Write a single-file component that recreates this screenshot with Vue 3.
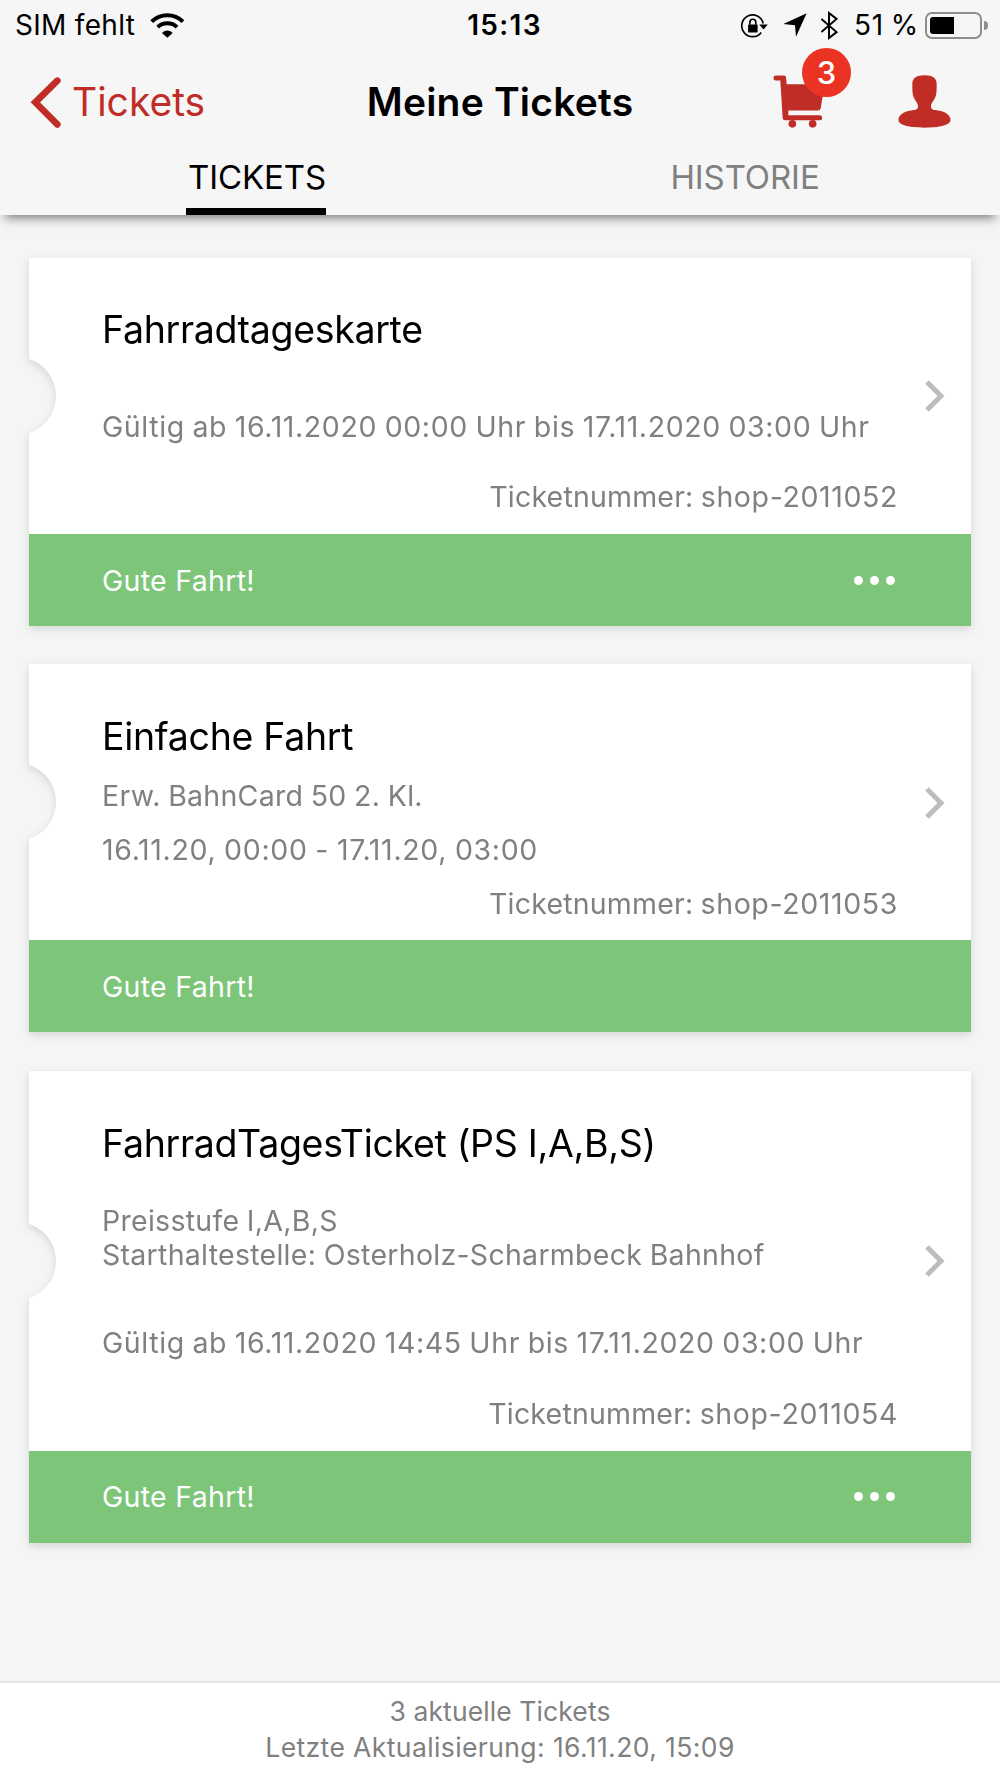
<template>
  <div class="screen">
    <header class="header">
      <!-- Status bar -->
      <div class="status-bar">
        <div class="status-left">
          <span class="carrier">SIM fehlt</span>
          <svg class="icon-wifi" viewBox="448 34 106 76">
            <path class="wifi-arc" d="M453 60 A68 68 0 0 1 548 60" />
            <path class="wifi-arc" d="M471 77 A43 43 0 0 1 530 77" />
            <path d="M484 95 Q500 80 517 95 L500.500 109 Z" />
          </svg>
        </div>
        <span class="clock">15:13</span>
        <div class="status-right">
          <svg class="icon-lock" viewBox="120 34 84 76">
            <path class="lock-ring" d="M190 66 A33 33 0 1 0 184 93" />
            <path d="M178 69 H204 L191 84 Z" />
            <rect x="144" y="69" width="29" height="24" rx="2" />
            <path class="lock-shackle" d="M149.500 70 V62 A9 9 0 0 1 167.500 62 V70" />
          </svg>
          <svg class="icon-location" viewBox="249 38 72 72">
            <path d="M320 39 L288 109 L285 75 L250 71 Z" />
          </svg>
          <svg class="icon-bluetooth" viewBox="361 30 54 88">
            <path d="M365 54 L411 94 L388 112 V36 L411 54 L365 94" />
          </svg>
          <span class="battery-level">{{ battery }} %</span>
          <div class="battery">
            <div class="battery-shell">
              <div class="battery-fill" :style="{ width: `${battery}%` }"></div>
            </div>
            <div class="battery-cap"></div>
          </div>
        </div>
      </div>

      <!-- Navigation -->
      <div class="nav-bar">
        <button class="back">
          <svg class="icon-back" viewBox="92 229 90 153">
            <path d="M171 240 L105 305 L171 371" />
          </svg>
          <span>Tickets</span>
        </button>
        <h1 class="nav-title">Meine Tickets</h1>
        <div class="nav-actions">
          <button class="cart">
            <svg class="icon-cart" viewBox="221 225 156 158">
              <path d="M230 226 H255 Q259 226 260 231 L262 252 H376 L364 325 Q362 331 356 331 H267 V345 H361 A7.500 7.500 0 0 1 361 360 H257 Q251 360 250 354 L243 241 H230 A7.500 7.500 0 0 1 230 226 Z" />
              <circle cx="279" cy="371" r="11.500" />
              <circle cx="340" cy="371" r="11.500" />
            </svg>
            <span class="badge">{{ tickets.length }}</span>
          </button>
          <button class="profile">
            <svg class="icon-profile" viewBox="594 221 160 161">
              <path d="M674 222 C699 222 712 231 711 250 C711 272 711 284 702 298 C695 309 693 312 694 319 C695 327 704 327 715 329 C739 333 753 343 753 358 C753 374 718 381 674 381 C630 381 595 374 595 358 C595 343 609 333 633 329 C644 327 653 327 654 319 C655 312 653 309 646 298 C637 284 637 272 637 250 C636 231 649 222 674 222 Z" />
            </svg>
          </button>
        </div>
      </div>

      <nav class="tabs">
        <div
          v-for="tab in tabs"
          :key="tab"
          class="tab"
          :class="{ active: tab === activeTab }"
          @click="activeTab = tab"
        >
          <span class="tab-label">{{ tab }}</span>
        </div>
      </nav>
    </header>

    <!-- Ticket list -->
    <main class="ticket-list">
      <article v-for="ticket in tickets" :key="ticket.number" class="ticket">
        <div class="ticket-body" :class="ticket.layout">
          <div class="ticket-text">
            <h2 class="ticket-title">{{ ticket.title }}</h2>
            <div v-if="ticket.details.length" class="ticket-details">
              <p v-for="line in ticket.details" :key="line">{{ line }}</p>
            </div>
            <p class="ticket-validity">{{ ticket.validity }}</p>
            <p class="ticket-number">Ticketnummer: <span class="number">{{ ticket.number }}</span></p>
          </div>
          <svg class="icon-chevron" viewBox="0 0 20 32">
            <path d="M2 2 L16 16 L2 30" />
          </svg>
        </div>
        <div class="ticket-footer">
          <span>Gute Fahrt!</span>
          <div v-if="ticket.hasMenu" class="menu-dots"><i></i><i></i><i></i></div>
        </div>
      </article>
    </main>

    <footer class="summary">
      <p class="summary-count">{{ tickets.length }} aktuelle Tickets</p>
      <p>Letzte Aktualisierung: 16.11.20, 15:09</p>
    </footer>
  </div>
</template>

<script setup>
import { ref } from 'vue';

const battery = 51;
const tabs = ['TICKETS', 'HISTORIE'];
const activeTab = ref('TICKETS');

const tickets = [
  {
    title: 'Fahrradtageskarte',
    details: [],
    validity: 'Gültig ab 16.11.2020 00:00 Uhr bis 17.11.2020 03:00 Uhr',
    number: 'shop-2011052',
    layout: 'regular',
    hasMenu: true,
  },
  {
    title: 'Einfache Fahrt',
    details: ['Erw. BahnCard 50 2. Kl.'],
    validity: '16.11.20, 00:00 - 17.11.20, 03:00',
    number: 'shop-2011053',
    layout: 'compact',
    hasMenu: false,
  },
  {
    title: 'FahrradTagesTicket (PS I,A,B,S)',
    details: ['Preisstufe I,A,B,S', 'Starthaltestelle: Osterholz-Scharmbeck Bahnhof'],
    validity: 'Gültig ab 16.11.2020 14:45 Uhr bis 17.11.2020 03:00 Uhr',
    number: 'shop-2011054',
    layout: 'detailed',
    hasMenu: true,
  },
];
</script>

<style>
body {
  margin: 0;
  background: #f5f5f5;
}
</style>

<style scoped>
.screen {
  display: flex;
  flex-direction: column;
  width: 1000px;
  height: 1778px;
  overflow: hidden;
  background: #f5f5f5;
  color: #000;
  font-family: Inter, 'Liberation Sans', sans-serif;
}

h1,
h2,
p {
  margin: 0;
  font-weight: 400;
}

button {
  padding: 0;
  border: none;
  background: none;
  color: inherit;
  font: inherit;
}

svg {
  display: block;
  flex: none;
  overflow: visible;
}

.header {
  position: relative;
  height: 215px;
  background: #f6f6f6;
  box-shadow: 0 8px 10px -5px rgba(0, 0, 0, 0.5);
}

/* Status bar */
.status-bar {
  display: grid;
  grid-template-columns: 1fr auto 1fr;
  align-items: center;
  height: 50px;
  padding: 0 12px 0 15px;
  font-size: 28px;
  line-height: 50px;
}

.status-left,
.status-right {
  display: flex;
  align-items: center;
}

.status-right {
  justify-content: flex-end;
}

.carrier {
  letter-spacing: 0.300px;
}

.clock {
  margin-left: 6px;
  font-weight: 600;
  letter-spacing: 1.300px;
}

.icon-wifi {
  width: 35px;
  height: 25px;
  margin-left: 15px;
}

.wifi-arc {
  fill: none;
  stroke: #000;
  stroke-width: 12;
}

.icon-lock {
  width: 28px;
  height: 25px;
}

.lock-ring,
.lock-shackle {
  fill: none;
  stroke: #000;
  stroke-width: 5;
}

.icon-location {
  width: 24px;
  height: 24px;
  margin-left: 15px;
}

.icon-bluetooth {
  width: 18px;
  height: 29px;
  margin-left: 13px;
}

.icon-bluetooth path {
  fill: none;
  stroke: #000;
  stroke-width: 6;
}

.battery-level {
  margin-left: 16px;
  letter-spacing: 0.700px;
  word-spacing: -1.500px;
}

.battery {
  display: flex;
  align-items: center;
  margin-left: 6px;
}

.battery-shell {
  box-sizing: border-box;
  width: 57px;
  height: 27px;
  padding: 3px;
  border: 2px solid #8e8e8e;
  border-radius: 7px;
}

.battery-fill {
  height: 100%;
  border-radius: 3px 0 0 3px;
  background: #000;
}

.battery-cap {
  width: 4px;
  height: 9px;
  margin-left: 2px;
  border-radius: 0 4px 4px 0;
  background: #8e8e8e;
}

/* Navigation */
.nav-bar {
  display: grid;
  grid-template-columns: 1fr auto 1fr;
  align-items: center;
  height: 104px;
  padding: 0 31px;
  font-size: 39px;
  line-height: 50px;
}

.back {
  display: flex;
  align-items: center;
  color: #c02d26;
}

.icon-back {
  width: 30px;
  height: 51px;
  margin-right: 11px;
}

.icon-back path {
  fill: none;
  stroke: #c02d26;
  stroke-width: 20;
  stroke-linecap: round;
  stroke-linejoin: miter;
}

.nav-title {
  font-size: 39px;
  font-weight: 600;
  letter-spacing: 0.200px;
}

.nav-actions {
  display: flex;
  justify-content: flex-end;
  align-items: center;
  gap: 73px;
  margin: -2px 18px 0 0;
  fill: #c02d26;
}

.cart {
  position: relative;
}

.icon-cart {
  width: 52px;
  height: 53px;
}

.badge {
  position: absolute;
  top: -27px;
  left: 29px;
  width: 49px;
  height: 49px;
  border-radius: 50%;
  background: #eb3323;
  color: #fff;
  font-size: 31px;
  font-weight: 500;
  line-height: 49px;
  text-align: center;
}

.icon-profile {
  width: 53px;
  height: 53px;
}

/* Tabs */
.tabs {
  display: flex;
  height: 61px;
  padding: 0 12px;
}

.tab {
  flex: 1;
  display: flex;
  justify-content: center;
  color: #808080;
  font-size: 33px;
  line-height: 47px;
}

.tab-label {
  box-sizing: border-box;
  height: 61px;
  padding-left: 2px;
  letter-spacing: -0.100px;
}

.tab.active {
  color: #000;
}

.tab.active .tab-label {
  border-bottom: 7px solid #000;
}

/* Ticket cards */
.ticket-list {
  flex: 1;
  display: flex;
  flex-direction: column;
  gap: 38.400px;
  padding: 43px 29px 0;
}

.ticket {
  filter: drop-shadow(0 3px 4px rgba(0, 0, 0, 0.13));
}

.ticket-body {
  display: flex;
  align-items: center;
  padding: 50px 26px 20px 73px;
  background: #fff;
  -webkit-mask: radial-gradient(circle at -12px 50%, transparent 38.500px, #000 39.300px);
  mask: radial-gradient(circle at -12px 50%, transparent 38.500px, #000 39.300px);
}

.ticket-body.compact {
  padding-top: 51px;
  padding-bottom: 19px;
}

.ticket-body.detailed {
  padding-top: 51px;
}

/* the chevron is centred on the whole body, so the text padding is pulled off */
.icon-chevron {
  width: 20px;
  height: 32px;
  margin: -30px 0 0 27px;
}

.icon-chevron path {
  fill: none;
  stroke: #bdbdbd;
  stroke-width: 5;
}

.ticket-text {
  flex: 1;
  display: flex;
  flex-direction: column;
  color: #808080;
  font-size: 28.500px;
  line-height: 34px;
  white-space: nowrap;
}

.ticket-title {
  color: #000;
  font-size: 37.500px;
  line-height: 44px;
  letter-spacing: -0.320px;
}

.ticket-details {
  letter-spacing: 0.280px;
  word-spacing: -0.800px;
}

.ticket-validity {
  letter-spacing: 0.600px;
  word-spacing: -0.900px;
}

.compact .ticket-validity {
  letter-spacing: 0.670px;
}

.ticket-number {
  text-align: right;
  letter-spacing: 0.200px;
  word-spacing: -1px;
}

.ticket-number .number {
  letter-spacing: 0.620px;
}

.regular .ticket-validity {
  margin-top: 58px;
}

.regular .ticket-number {
  margin-top: 36px;
}

.detailed .ticket-details {
  margin-top: 38px;
}

.detailed .ticket-validity {
  margin-top: 54px;
}

.detailed .ticket-number {
  margin-top: 37px;
}

.compact .ticket-details,
.compact .ticket-validity,
.compact .ticket-number {
  margin-top: 20px;
}

.ticket-footer {
  display: flex;
  align-items: center;
  justify-content: space-between;
  height: 92px;
  padding: 0 76px 0 73px;
  background: #7cc579;
  color: #fff;
  font-size: 28.500px;
  letter-spacing: 0.300px;
}

.menu-dots {
  display: flex;
  gap: 7px;
}

.menu-dots i {
  width: 9px;
  height: 9px;
  border-radius: 50%;
  background: #fff;
}

/* Summary */
.summary {
  box-sizing: border-box;
  height: 97px;
  padding-top: 10px;
  border-top: 2px solid #e4e4e4;
  background: #fff;
  color: #808080;
  font-size: 26.500px;
  line-height: 36px;
  letter-spacing: 0.400px;
  text-align: center;
}

.summary-count {
  letter-spacing: 0.100px;
}
</style>
